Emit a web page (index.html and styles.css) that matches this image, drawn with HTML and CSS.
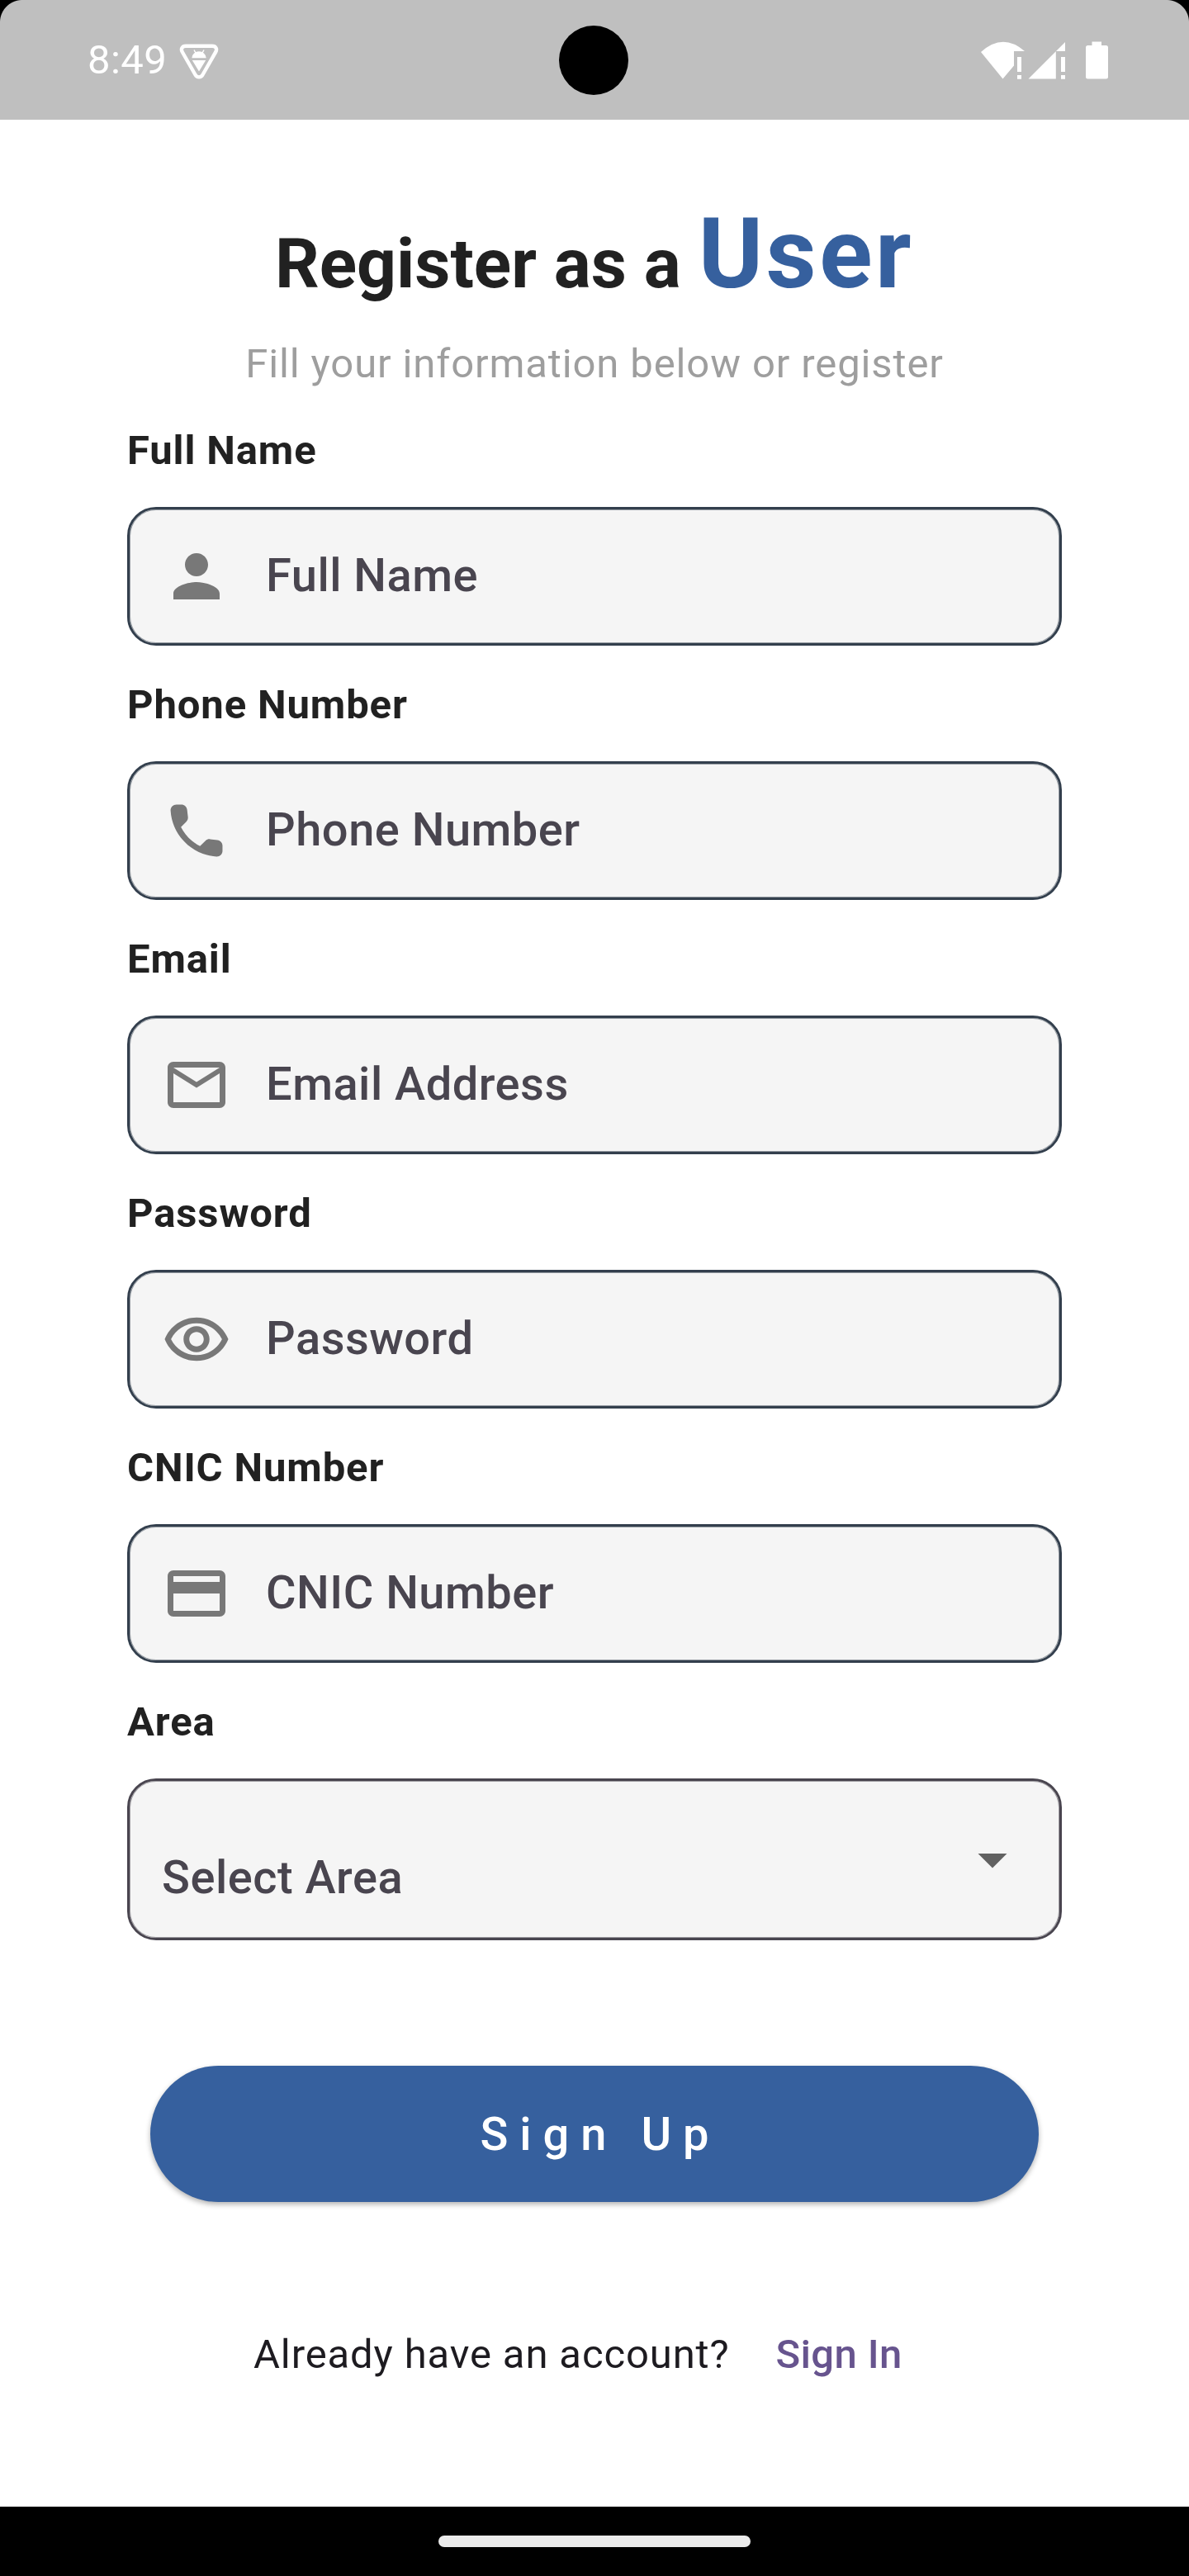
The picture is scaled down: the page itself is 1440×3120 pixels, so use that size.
FILE: index.html
```html
<!DOCTYPE html>
<html lang="en">
<head>
<meta charset="utf-8">
<title>Register as a User</title>
<link rel="stylesheet" href="styles.css">
</head>
<body>
<div class="screen">
  <header class="status-bar">
    <div class="status-left">
      <span class="clock">8:49</span>
      <svg class="debug-icon" width="48" height="44" viewBox="0 0 48 44">
        <path d="M8 2.7H40C44.5 2.7 46.3 6.5 44.2 10L28.5 37.5C26.5 41.3 21.500 41.3 19.500 37.500L3.800 10C1.700 6.500 3.500 2.700 8 2.700Z" fill="none" stroke="#fff" stroke-width="4.400"/>
        <path d="M15.300 17.300A8.700 8 0 0 1 32.700 17.300ZM15.800 20H32.200L24 33.500Z" fill="#fff"/>
        <path d="M18 7.500L20.200 11.500M30 7.500L27.800 11.500" stroke="#fff" stroke-width="1.500"/>
      </svg>
    </div>
    <div class="camera"></div>
    <svg class="status-right" width="156" height="46" viewBox="0 0 156 46" fill="#fff">
      <path d="M0 13Q26.500 -11 53 12H40V29.500L26.500 45.500ZM44 19h5v18h-5zM44 41h5v4.700h-5z"/>
      <path d="M57.500 45.500L102 1V12H90.800V45.500ZM97 19h5v18h-5zM97 41h5v4.700h-5z"/>
      <path d="M134.500 0.500H146V5H151.500Q154 5 154 7.500V43Q154 45.500 151.500 45.500H129.500Q127 45.500 127 43V7.500Q127 5 129.500 5H134.500Z"/>
    </svg>
  </header>

  <main class="page">
    <h1 class="title"><span class="title-lead">Register as a </span>User</h1>
    <p class="subtitle">Fill your information below or register</p>

    <form class="form">
      <div class="group">
        <label class="label">Full Name</label>
        <div class="field">
          <svg class="icon" viewBox="0 0 24 24"><path d="M12 12c2.210 0 4-1.790 4-4s-1.790-4-4-4-4 1.790-4 4 1.790 4 4 4zm0 2c-2.670 0-8 1.340-8 4v2h16v-2c0-2.660-5.330-4-8-4z"/></svg>
          <span class="hint">Full Name</span>
        </div>
      </div>
      <div class="group">
        <label class="label">Phone Number</label>
        <div class="field">
          <svg class="icon" viewBox="0 0 24 24"><path d="M19.230 15.260l-2.540-.29c-.61-.07-1.210.14-1.640.57l-1.840 1.840c-2.830-1.440-5.150-3.750-6.590-6.590l1.850-1.850c.43-.43.64-1.030.57-1.640l-.29-2.520c-.12-1.010-.97-1.770-1.990-1.770H5.030c-1.130 0-2.070.94-2 2.070.53 8.540 7.360 15.360 15.890 15.890 1.130.07 2.070-.87 2.070-2v-1.730c.01-1.010-.75-1.860-1.760-1.980z"/></svg>
          <span class="hint">Phone Number</span>
        </div>
      </div>
      <div class="group">
        <label class="label">Email</label>
        <div class="field">
          <svg class="icon" viewBox="0 0 24 24"><path d="M22 6c0-1.100-.9-2-2-2H4c-1.100 0-2 .9-2 2v12c0 1.100.9 2 2 2h16c1.100 0 2-.9 2-2V6zm-2 0l-8 5-8-5h16zm0 12H4V8l8 5 8-5v10z"/></svg>
          <span class="hint">Email Address</span>
        </div>
      </div>
      <div class="group">
        <label class="label">Password</label>
        <div class="field">
          <svg class="icon" viewBox="0 0 24 24"><path d="M12 6.500c3.790 0 7.170 2.130 8.820 5.500-1.650 3.370-5.030 5.500-8.820 5.500S4.830 15.370 3.180 12C4.830 8.630 8.210 6.500 12 6.500m0-2C7 4.500 2.730 7.610 1 12c1.730 4.390 6 7.500 11 7.500s9.270-3.110 11-7.500c-1.730-4.390-6-7.500-11-7.500zm0 5c1.380 0 2.500 1.120 2.500 2.500s-1.120 2.500-2.500 2.500-2.500-1.120-2.500-2.500 1.120-2.500 2.500-2.500m0-2c-2.480 0-4.500 2.020-4.500 4.500s2.020 4.500 4.500 4.500 4.500-2.020 4.500-4.500-2.020-4.500-4.500-4.500z"/></svg>
          <span class="hint">Password</span>
        </div>
      </div>
      <div class="group">
        <label class="label">CNIC Number</label>
        <div class="field">
          <svg class="icon" viewBox="0 0 24 24"><path d="M20 4H4c-1.110 0-1.990.89-1.990 2L2 18c0 1.110.89 2 2 2h16c1.110 0 2-.89 2-2V6c0-1.110-.89-2-2-2zm0 14H4v-6h16v6zm0-10H4V6h16v2z"/></svg>
          <span class="hint">CNIC Number</span>
        </div>
      </div>
      <div class="group">
        <label class="label">Area</label>
        <div class="field select">
          <span class="hint">Select Area</span>
          <svg class="caret" viewBox="0 0 24 24"><path d="M7 10l5 5 5-5z"/></svg>
        </div>
      </div>
      <button class="submit" type="button">Sign Up</button>
    </form>

    <div class="footer">
      <span class="question">Already have an account?</span>
      <a class="sign-in">Sign In</a>
    </div>
  </main>

  <nav class="nav-bar"><div class="nav-pill"></div></nav>
</div>
</body>
</html>
```
FILE: styles.css
```css
* { box-sizing: border-box; }

body {
  margin: 0;
  background: #000;
  font-family: Roboto, "Liberation Sans", sans-serif;
}

.screen {
  width: 1440px;
  height: 3120px;
  display: flex;
  flex-direction: column;
  background: #fff;
}

.status-bar {
  flex: none;
  height: 145px;
  display: grid;
  grid-template-columns: 1fr auto 1fr;
  align-items: center;
  padding: 0 96px 0 106px;
  background:
    radial-gradient(circle at 27px 27px, #bfbfbf 26.5px, #000 27.5px) left top / 27px 27px no-repeat,
    radial-gradient(circle at 0 27px, #bfbfbf 26.5px, #000 27.5px) right top / 27px 27px no-repeat,
    #bfbfbf;
}

.status-left { display: flex; align-items: center; gap: 15px; margin-top: 1px; }
.clock { font-size: 49px; line-height: 58px; letter-spacing: 0.4px; color: #fff; }
.debug-icon { margin-top: 4px; }
.camera { width: 84px; height: 84px; border-radius: 50%; background: #000; margin-right: 12px; }
.status-right { justify-self: end; }

.page {
  flex: 1;
  display: flex;
  flex-direction: column;
  padding: 93px 154px 0;
}

.title {
  margin: 0;
  font-size: 119px;
  line-height: 140px;
  font-weight: 700;
  letter-spacing: 3.5px;
  color: #36609e;
  text-align: center;
  white-space: pre;
}
.title-lead { font-size: 84px; line-height: 0; letter-spacing: 0; color: #212121; }

.subtitle {
  margin: 34px 0 47px;
  font-size: 49px;
  line-height: 58px;
  letter-spacing: 0.875px;
  color: #9e9e9e;
  text-align: center;
}

.form { display: flex; flex-direction: column; gap: 43px; }
.group { display: flex; flex-direction: column; gap: 39px; }

.label {
  font-size: 49px;
  line-height: 58px;
  font-weight: 700;
  letter-spacing: 0.875px;
  color: #212121;
}

.field {
  height: 168px;
  display: flex;
  align-items: center;
  padding-left: 39px;
  border: 3px solid #333f4d;
  border-radius: 35px;
  background: #f5f5f5;
  box-shadow: inset 0 0 0 1px rgba(51, 63, 77, 0.5);
}
.icon { width: 84px; height: 84px; margin-right: 42px; fill: #787878; }
.hint {
  padding-bottom: 2px;
  font-size: 56px;
  line-height: 84px;
  font-weight: 500;
  letter-spacing: 0.5px;
  color: #49454f;
}

.select {
  height: 196px;
  justify-content: space-between;
  padding-right: 39px;
  border-color: #49454f;
  box-shadow: inset 0 0 0 1px rgba(73, 69, 79, 0.5);
}
.select .hint { padding: 44px 0 0; }
.caret { width: 84px; height: 84px; fill: #616161; }

.submit {
  height: 164.5px;
  margin: 109px 28px 0;
  padding: 1px 0 0 14px;
  border: 0;
  border-radius: 83px;
  background: #36609e;
  box-shadow: 0 3px 6px rgba(0, 0, 0, 0.3);
  font: 500 56px/84px Roboto, "Liberation Sans", sans-serif;
  letter-spacing: 14px;
  color: #fff;
}

.footer {
  display: flex;
  gap: 56px;
  margin: 156.5px 0 0 153px;
  font-size: 49px;
  line-height: 58px;
}
.question { letter-spacing: 0.875px; color: #1d1b20; }
.sign-in { font-weight: 500; letter-spacing: 0.35px; color: #67548e; }

.nav-bar {
  flex: none;
  height: 84px;
  display: flex;
  align-items: center;
  justify-content: center;
  background: #000;
}
.nav-pill { width: 378px; height: 14px; border-radius: 7px; background: #ebebeb; }
```
